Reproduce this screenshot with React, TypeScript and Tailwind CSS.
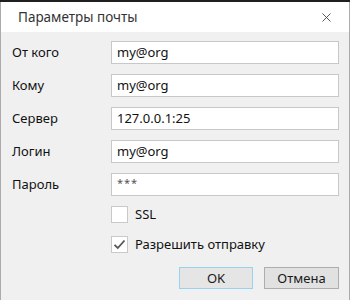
import { X } from 'lucide-react';

const fields = [
  { label: 'От кого', value: 'my@org' },
  { label: 'Кому', value: 'my@org' },
  { label: 'Сервер', value: '127.0.0.1:25' },
  { label: 'Логин', value: 'my@org' },
  { label: 'Пароль', value: '***', secret: true },
];

function Check({ checked, label }: { checked?: boolean; label: string }) {
  return (
    <div className="flex items-center gap-[7px] h-[17px]">
      <div className="w-[17px] h-[17px] bg-white border border-[#c9c9c9] flex items-center justify-center">
        {checked && (
          <svg width="13" height="13" viewBox="0 0 13 13">
            <path d="M1.5 6.8 L4.8 10 L11.5 2.5" fill="none" stroke="#555" strokeWidth="1.8" />
          </svg>
        )}
      </div>
      <span className="leading-[17px]">{label}</span>
    </div>
  );
}

export default function App() {
  return (
    <div
      className="w-[350px] h-[300px] bg-[#f0f0f0] border-x border-[#ababab] flex flex-col text-[13px] text-[#111]"
      style={{ fontFamily: '"Noto Sans", "Open Sans", sans-serif' }}
    >
      <div className="h-[2px] bg-[#1f1f1f] -mx-px" />
      <div className="h-[30px] bg-white flex items-center justify-between pl-[17px] pr-[15px]">
        <span className="text-[#333] text-[13.5px]">Параметры почты</span>
        <X className="w-[15px] h-[15px] text-[#444]" strokeWidth={1.4} />
      </div>

      <div className="flex flex-col gap-[10px] pt-[9px] pl-[11px] pr-[10px]">
        {fields.map((f) => (
          <div key={f.label} className="flex items-center h-[23px]">
            <span className="w-[99px]">{f.label}</span>
            <div className="flex-1 h-[23px] bg-white border border-[#c8c8c8] flex items-center px-[5px] text-[#111]">
              {f.secret ? (
                <span className="text-[11px] text-[#555] tracking-[1px] -mt-[3px]">{f.value}</span>
              ) : (
                f.value
              )}
            </div>
          </div>
        ))}
      </div>

      <div className="flex flex-col gap-[13px] pl-[110px] pt-[10px]">
        <Check label="SSL" />
        <Check checked label="Разрешить отправку" />
      </div>

      <div className="flex justify-end gap-[11px] pr-[10px] pt-[14px]">
        <button className="w-[74px] h-[22px] bg-[#e5e5e5] border border-[#99d1f0] text-[#1a1a1a] leading-none">OK</button>
        <button className="w-[75px] h-[22px] bg-[#e1e1e1] border border-[#adadad] text-[#1a1a1a] leading-none">Отмена</button>
      </div>
    </div>
  );
}
